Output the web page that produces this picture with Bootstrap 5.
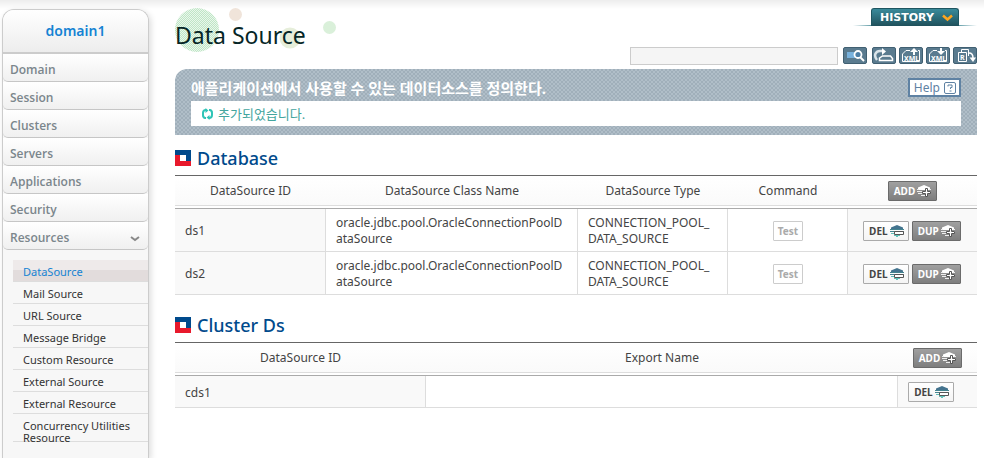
<!DOCTYPE html>
<html lang="ko">
<head>
<meta charset="utf-8">
<meta name="viewport" content="width=device-width, initial-scale=1">
<title>Data Source</title>
<link href="https://cdn.jsdelivr.net/npm/bootstrap@5.3.0/dist/css/bootstrap.min.css" rel="stylesheet">
<style>
body{font-family:"Noto Sans","Noto Sans CJK KR",sans-serif;font-size:12px;line-height:16px;color:#444;background:linear-gradient(#ededed,#fff 9px) no-repeat #fff}
a{text-decoration:none}
.side{width:147px;margin:9px 0 0 2px;border:1px solid #ccc;border-bottom:0;border-radius:12px 12px 0 0;background:#f7f7f7;box-shadow:2px 2px 6px #ddd;overflow:hidden}
.side-title{height:44px;border-bottom:2px solid #ccc;background:linear-gradient(#fff,#ededed);color:#1583d3;font-size:14px;font-weight:600}
.side-item{height:28px;padding:8px 8px 0 7px;border-bottom:1px solid #c6c6c6;border-radius:0 0 5px 5px;background:linear-gradient(#fff,#f0f0f0);color:#7b868c;font-family:"Open Sans",sans-serif;font-size:12px;font-weight:600}
.sub-list{margin:10px 0 0 10px}
.sub-item{height:22px;padding:6px 0 0 10px;border-bottom:1px solid #ddd;color:#333;line-height:12px;font-size:11px}
.sub-item.current{color:#1583d3;background:linear-gradient(#eeeaea 50%,#e2dcdc 50%)}
.sub-item.tall{height:28px}
.content{padding:8px 7px 16px 26px;min-width:0}
.top{height:39px}
.page-title{margin:13px 0 0;font-size:23px;line-height:28px;font-weight:400;color:#062626;position:relative}
.deco{left:0;top:0}
.history{height:18px;padding:0 5px 0 8px;margin:0 18px;border:1px solid #1f5661;border-bottom:0;border-radius:3px 3px 0 0;background:linear-gradient(#3a8b9b,#1f505b);color:#fff;font-family:"DejaVu Sans",sans-serif;font-size:11px;font-weight:700}
.history-wrap{background:linear-gradient(90deg,transparent,#5d9aa5 15%,#5d9aa5 85%,transparent) bottom/100% 1px no-repeat;height:18px}
.search{width:208px;height:18px;border:1px solid #ccc;background:#f5f5f5;padding:0 4px;border-radius:0;font-size:12px}
.tools{gap:3px;margin-left:5px}
.tool{width:24px;height:17px;padding:0;border:1px solid #416072;border-radius:2px;background:#5a7b8f}
.tool.find{margin-right:2px}
.tool svg{display:block;margin:auto}
.banner{margin-top:4px;padding:9px 16px;border-radius:12px 0 0 0;background:repeating-conic-gradient(#a0afba 0 25%,#b0bec8 0 50%) 0 0/4px 4px}
.banner-title{font-size:15px;line-height:20px;font-weight:700;color:#fff}
.help{height:19px;border:2px solid #5f82a3;border-radius:0;background:#fff;padding:0 2px 0 4px;gap:3px;color:#5f82a3;font-size:12px;line-height:14px}
.notice{height:25px;padding:0 10px;margin-top:3px;background:#fff;color:#43a59e;font-size:13px}
.sect{margin:11px 0 5px;gap:6px;font-size:18px;line-height:24px;font-weight:500;color:#004a8c}
.sect.next{margin-top:18px}
.grid{width:100%;table-layout:fixed;border-collapse:separate;border-spacing:0}
.grid th{height:34px;padding:0 4px 3px;border-top:1px solid #666;border-bottom:1px solid #aaa;text-align:center;font-weight:400;vertical-align:middle;background:linear-gradient(#ddd,#ddd) 0 29px/100% 1px no-repeat,linear-gradient(#fff,#fafafa) 0 0/100% 29px no-repeat}
.grid td{height:43px;padding:2px 9px 0 10px;border-bottom:1px solid #ddd;border-right:1px solid #ddd;vertical-align:middle;overflow-wrap:anywhere}
.grid.short td{height:32px}
.grid td:first-child{background:#f9f9f9}
.grid td:last-child{background:#f9f9f9;border-right:0;padding:1px 5px 0 4px;text-align:center}
.grid.short td:last-child{padding:0 17px 0 4px}
.act{height:20px;border-radius:1px;font-size:10px;line-height:14px;font-weight:700;padding:0 4px 0 5px;border:1px solid #aaa;background:linear-gradient(#fff,#f4f4f4);color:#444;display:inline-flex;align-items:center;gap:2px;vertical-align:middle;white-space:nowrap}
.act.del{padding-right:3px}
.act.dark{border-color:#6b6b6b;background:linear-gradient(#a0a0a0,#7e7e7e);color:#fff}
.act.test{padding:0 4px;border-color:#ccc;background:#fff;color:#aaa}
.c-id{width:151px}.c-type{width:150px}.c-cmd{width:120px}.c-act{width:129px}.c-id2{width:251px}.c-act2{width:79px}
</style>
<script src="https://cdn.jsdelivr.net/npm/bootstrap@5.3.0/dist/js/bootstrap.bundle.min.js"></script>
</head>
<body>
<svg width="0" height="0" class="position-absolute" aria-hidden="true">
<defs>
<pattern id="dots" width="2" height="2" patternUnits="userSpaceOnUse"><rect width="2" height="2" fill="#e9f7eb"/><path d="M0 0h1v1H0zM1 1h1v1H1z" fill="#bfe5c6"/></pattern>
<symbol id="plus" viewBox="0 0 15 14"><path d="M7 1l6 2.500V6H1V3.500z" fill="#fff"/><path d="M0 5.500h2m10 0h2M0 7.500h14M1 9.500h12M4 11.500h6" stroke="#eee"/><path d="M8.500 4.500h2v3h3v2h-3v3h-2v-3h-3v-2h3z" fill="#fff" stroke="#555"/></symbol>
<symbol id="minus" viewBox="0 0 15 14"><path d="M7 1l6 2.500V6H1V3.500z" fill="#43738e"/><path d="M0 5.500h14M0 7.500h14" stroke="#43838f"/><path d="M1 9.500h12M4 11.500h6M6 12.500h2" stroke="#62c0b8"/><path d="M4.500 7.500h9v3h-9z" fill="#fff" stroke="#555"/></symbol>
<symbol id="flag" viewBox="0 0 16 16"><path d="M0 0h16v16H0z" fill="#e8192c"/><path d="M0 0h16v11h-5V5H0z" fill="#004a8c"/><path d="M5 5h6v6H5z" fill="#fff"/></symbol>
</defs>
</svg>
<div class="d-flex min-vh-100">
<aside class="side flex-shrink-0">
<div class="side-title d-flex align-items-center justify-content-center">domain1</div>
<nav>
<a href="#" class="side-item d-block">Domain</a>
<a href="#" class="side-item d-block">Session</a>
<a href="#" class="side-item d-block">Clusters</a>
<a href="#" class="side-item d-block">Servers</a>
<a href="#" class="side-item d-block">Applications</a>
<a href="#" class="side-item d-block">Security</a>
<a href="#" class="side-item d-flex justify-content-between">Resources<svg width="10" height="16" viewBox="0 0 10 16" fill="none" stroke="#888" stroke-width="2"><path d="M1 7l4 3 4-3"/></svg></a>
<div class="sub-list">
<a href="#" class="sub-item current d-block">DataSource</a>
<a href="#" class="sub-item d-block">Mail Source</a>
<a href="#" class="sub-item d-block">URL Source</a>
<a href="#" class="sub-item d-block">Message Bridge</a>
<a href="#" class="sub-item d-block">Custom Resource</a>
<a href="#" class="sub-item d-block">External Source</a>
<a href="#" class="sub-item d-block">External Resource</a>
<a href="#" class="sub-item tall d-block">Concurrency Utilities Resource</a>
</div>
</nav>
</aside>
<main class="content flex-grow-1">
<header class="top d-flex justify-content-between position-relative">
<svg class="deco position-absolute" width="170" height="46" aria-hidden="true"><circle cx="22" cy="22" r="22" fill="url(#dots)"/><circle cx="60.500" cy="6.500" r="6.500" fill="#f0e4da"/><circle cx="115" cy="30" r="10.500" fill="#e6eeda"/><circle cx="154.500" cy="19.500" r="6.500" fill="#daf0da"/></svg>
<h1 class="page-title">Data Source</h1>
<div class="history-wrap"><button type="button" class="history d-flex align-items-center gap-2">HISTORY<svg width="11" height="8" viewBox="0 0 11 8" fill="none" stroke="#ffa51f" stroke-width="2.500"><path d="M1 1.500l4.500 4 4.500-4"/></svg></button></div>
</header>
<form class="d-flex justify-content-end">
<input type="text" class="search" aria-label="Search text">
<div class="tools d-flex">
<button type="button" class="tool find" aria-label="Search"><svg width="22" height="15" viewBox="0 0 22 15"><path d="M3 4h10v6H3z" fill="#78b1dc"/><circle cx="14" cy="6.500" r="3.500" fill="#4c7ea5" stroke="#fff" stroke-width="1.800"/><path d="M16 9l4 4" stroke="#fff" stroke-width="2"/></svg></button>
<button type="button" class="tool" aria-label="Restore"><svg width="22" height="15" viewBox="0 0 22 15" fill="none" stroke="#fff"><path d="M4 12C0 7 3 3 7 3h3" stroke="#dbe4e9" stroke-width="2.500"/><path d="M9 0l4 3.500L9 7z" fill="#fff" stroke="none"/><path d="M6.500 10l3-2h8l2 2.500v2h-13z" stroke-width="1.500"/></svg></button>
<button type="button" class="tool" aria-label="Export XML"><svg width="22" height="15" viewBox="0 0 22 15"><path d="M10 2.500H6L2.500 6v7.500h17v-11H18" fill="none" stroke="#fff"/><path d="M14 0l4 4h-3v3h-2V4h-3z" fill="#fff"/><text x="4" y="12.500" font-size="7" font-weight="700" fill="#fff">XML</text></svg></button>
<button type="button" class="tool" aria-label="Import XML"><svg width="22" height="15" viewBox="0 0 22 15"><path d="M10 2.500H6L2.500 6v7.500h17v-11H18" fill="none" stroke="#fff"/><path d="M14 7l4-4h-3V0h-2v3h-3z" fill="#fff"/><text x="4" y="12.500" font-size="7" font-weight="700" fill="#fff">XML</text></svg></button>
<button type="button" class="tool" aria-label="Resource reference"><svg width="22" height="15" viewBox="0 0 22 15"><path d="M7.500 4V1.500h7V8M4.500 4.500h8v9h-8z" fill="none" stroke="#fff"/><text x="6" y="12" font-size="7" font-weight="700" fill="#fff">R</text><path d="M15 5c3 0 4 2 4 5" fill="none" stroke="#fff" stroke-width="1.500"/><path d="M15.500 9.500H22L19 14z" fill="#fff"/></svg></button>
</div>
</form>
<section class="banner">
<div class="d-flex justify-content-between">
<div class="banner-title">애플리케이션에서 사용할 수 있는 데이터소스를 정의한다.</div>
<button type="button" class="help d-flex align-items-center">Help<svg width="14" height="14" viewBox="0 0 14 14" fill="none" stroke="#5f82a3"><rect x="1.500" y="1.500" width="11" height="11" rx="1.500"/><path d="M5 5.500V4h4v2.500H7.500V8M6.500 10h2"/></svg></button>
</div>
<div class="notice d-flex align-items-center"><svg class="me-1" width="13" height="12" viewBox="0 0 13 12" fill="none" stroke="#2fc4b6" stroke-width="2"><path d="M5 10H4a3 3 0 0 1-2-3V5a3 3 0 0 1 3-3M8 2h1a3 3 0 0 1 2 3v2a3 3 0 0 1-3 3"/><path d="M4.500 0l3 2.500-3 2.500zM8.500 7l-3 2.500 3 2.500z" fill="#2fc4b6" stroke="none"/></svg>추가되었습니다.</div>
</section>
<h2 class="sect d-flex align-items-center"><svg width="16" height="16"><use href="#flag"/></svg><span>Database</span></h2>
<table class="grid">
<colgroup><col class="c-id"><col><col class="c-type"><col class="c-cmd"><col class="c-act"></colgroup>
<thead><tr><th>DataSource ID</th><th>DataSource Class Name</th><th>DataSource Type</th><th>Command</th><th><button type="button" class="act dark">ADD<svg width="15" height="14"><use href="#plus"/></svg></button></th></tr></thead>
<tbody>
<tr><td>ds1</td><td>oracle.jdbc.pool.OracleConnectionPoolDataSource</td><td>CONNECTION_POOL_<wbr>DATA_SOURCE</td><td class="text-center"><button type="button" class="act test">Test</button></td><td><button type="button" class="act del">DEL<svg width="15" height="14"><use href="#minus"/></svg></button> <button type="button" class="act dark">DUP<svg width="15" height="14"><use href="#plus"/></svg></button></td></tr>
<tr><td>ds2</td><td>oracle.jdbc.pool.OracleConnectionPoolDataSource</td><td>CONNECTION_POOL_<wbr>DATA_SOURCE</td><td class="text-center"><button type="button" class="act test">Test</button></td><td><button type="button" class="act del">DEL<svg width="15" height="14"><use href="#minus"/></svg></button> <button type="button" class="act dark">DUP<svg width="15" height="14"><use href="#plus"/></svg></button></td></tr>
</tbody>
</table>
<h2 class="sect next d-flex align-items-center"><svg width="16" height="16"><use href="#flag"/></svg><span>Cluster Ds</span></h2>
<table class="grid short">
<colgroup><col class="c-id2"><col><col class="c-act2"></colgroup>
<thead><tr><th>DataSource ID</th><th>Export Name</th><th><button type="button" class="act dark">ADD<svg width="15" height="14"><use href="#plus"/></svg></button></th></tr></thead>
<tbody><tr><td>cds1</td><td></td><td><button type="button" class="act del">DEL<svg width="15" height="14"><use href="#minus"/></svg></button></td></tr></tbody>
</table>
</main>
</div>
</body>
</html>
